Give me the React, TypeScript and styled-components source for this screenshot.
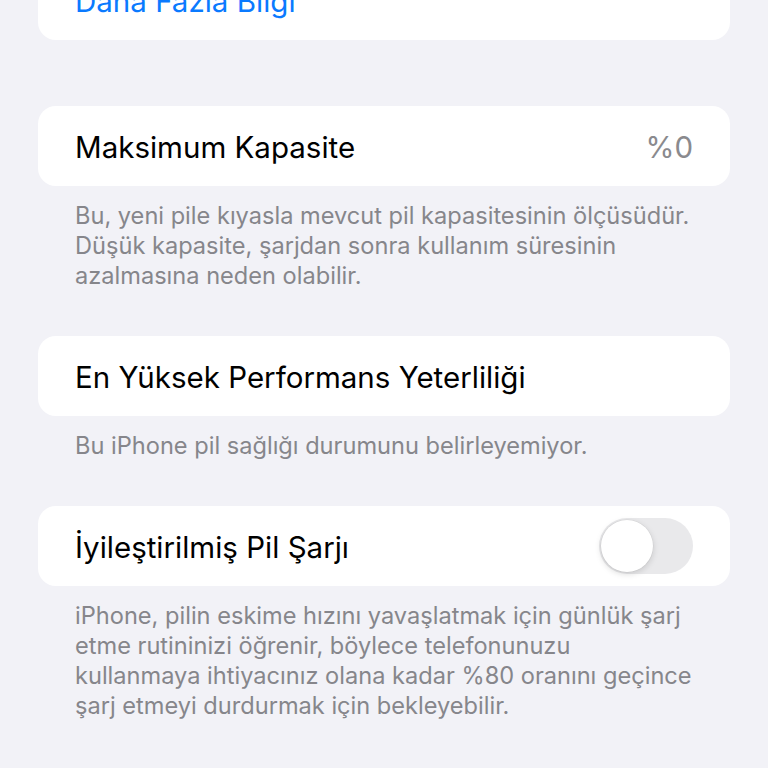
import React from 'react'
import styled, { createGlobalStyle } from 'styled-components'

const GlobalStyle = createGlobalStyle`
  html, body {
    margin: 0;
    padding: 0;
    background: #f2f2f7;
    overflow: hidden;
  }
  body {
    font-family: Inter, "Noto Sans", "Liberation Sans", sans-serif;
    -webkit-font-smoothing: antialiased;
  }
`

const Screen = styled.div`
  width: 768px;
  height: 768px;
  overflow: hidden;
  background: #f2f2f7;
`

const List = styled.div`
  display: flex;
  flex-direction: column;
  padding: 0 38px;
  margin-top: -40px;
`

const Group = styled.section<{ $gap: number }>`
  display: flex;
  flex-direction: column;
  margin-bottom: ${p => p.$gap}px;
`

const Card = styled.div`
  background: #ffffff;
  border-radius: 18px;
  height: 80px;
  padding: 0 37px;
  display: flex;
  align-items: center;
  justify-content: space-between;
`

const Label = styled.span<{ $link?: boolean }>`
  font-size: 29.5px;
  padding-top: 2px;
  color: ${p => (p.$link ? '#0a7aff' : '#000000')};
`

const Value = styled.span`
  font-size: 29.5px;
  padding-top: 2px;
  color: #8a8a8e;
`

const Footer = styled.p`
  margin: 0;
  padding: 15px 37px 0;
  font-size: 23.6px;
  line-height: 30px;
  color: #86868b;
`

const Switch = styled.div<{ $on: boolean }>`
  width: 94px;
  height: 56px;
  border-radius: 28px;
  background: ${p => (p.$on ? '#34c759' : '#e9e9eb')};
  position: relative;
  flex-shrink: 0;
`

const Knob = styled.div<{ $on: boolean }>`
  position: absolute;
  top: 2px;
  left: ${p => (p.$on ? '40px' : '2px')};
  width: 52px;
  height: 52px;
  border-radius: 50%;
  background: #ffffff;
  box-shadow: 0 2px 6px rgba(0, 0, 0, 0.15), 0 0 0 0.5px rgba(0, 0, 0, 0.06);
`

const Toggle = ({ on }: { on: boolean }) => (
  <Switch $on={on}>
    <Knob $on={on} />
  </Switch>
)

const App = () => {
  return (
    <Screen>
      <GlobalStyle />
      <List>
        <Group $gap={66}>
          <Card>
            <Label $link>Daha Fazla Bilgi</Label>
          </Card>
        </Group>
        <Group $gap={45}>
          <Card>
            <Label>Maksimum Kapasite</Label>
            <Value>%0</Value>
          </Card>
          <Footer>
            Bu, yeni pile kıyasla mevcut pil kapasitesinin ölçüsüdür.
            <br />
            Düşük kapasite, şarjdan sonra kullanım süresinin
            <br />
            azalmasına neden olabilir.
          </Footer>
        </Group>
        <Group $gap={45}>
          <Card>
            <Label>En Yüksek Performans Yeterliliği</Label>
          </Card>
          <Footer>Bu iPhone pil sağlığı durumunu belirleyemiyor.</Footer>
        </Group>
        <Group $gap={45}>
          <Card>
            <Label>İyileştirilmiş Pil Şarjı</Label>
            <Toggle on={false} />
          </Card>
          <Footer>
            iPhone, pilin eskime hızını yavaşlatmak için günlük şarj
            <br />
            etme rutininizi öğrenir, böylece telefonunuzu
            <br />
            kullanmaya ihtiyacınız olana kadar %80 oranını geçince
            <br />
            şarj etmeyi durdurmak için bekleyebilir.
          </Footer>
        </Group>
      </List>
    </Screen>
  )
}

export default App
